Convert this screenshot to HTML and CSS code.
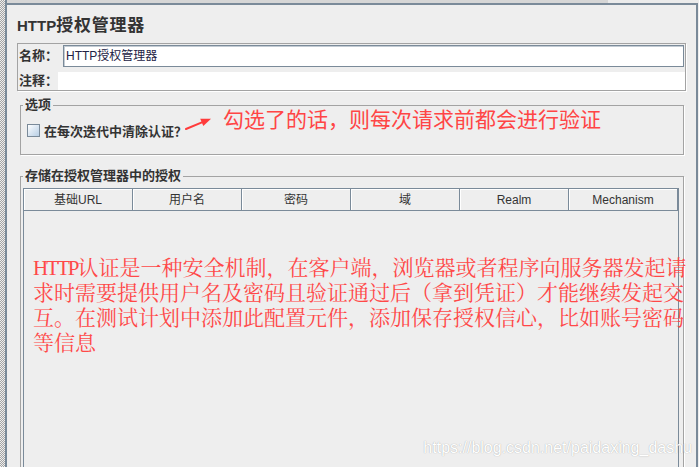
FILE: index.html
```html
<!DOCTYPE html>
<html>
<head>
<meta charset="utf-8">
<link rel="stylesheet" href="styles.css">
</head>
<body>
<div class="app">
  <div class="dots"></div>
  <div class="main">
    <div class="topstrip"></div>
    <div class="panel">
      <div class="title"><span class="t-en">HTTP</span><span class="t-zh">授权管理器</span></div>
      <div class="namebox">
        <div class="row row-name">
          <div class="lbl lbl-name">名称：</div>
          <div class="input">HTTP授权管理器</div>
        </div>
        <div class="row row-note">
          <div class="lbl lbl-note">注释：</div>
          <div class="note"></div>
        </div>
      </div>
      <fieldset class="group g-opt">
        <legend>选项</legend>
        <div class="opt-row"><span class="cb"></span><span class="opt-lbl">在每次迭代中清除认证？</span></div>
      </fieldset>
      <fieldset class="group g-auth">
        <legend>存储在授权管理器中的授权</legend>
        <div class="scroll">
          <div class="thead">
            <div class="th">基础URL</div>
            <div class="th">用户名</div>
            <div class="th">密码</div>
            <div class="th">域</div>
            <div class="th">Realm</div>
            <div class="th">Mechanism</div>
          </div>
        </div>
      </fieldset>
    </div>
  </div>
  <svg class="anno-arrow" width="30" height="20" viewBox="0 0 30 20">
    <line x1="2" y1="17" x2="18.5" y2="10.2" stroke="#ff3b3b" stroke-width="2" stroke-linecap="round"/>
    <polygon points="27,6.8 19.3,14 16.2,6.8" fill="#ff3b3b"/>
  </svg>
  <div class="anno-text1">勾选了的话，则每次请求前都会进行验证</div>
  <div class="anno-big">
    <div class="big-line"><span class="http">HTTP</span>认证是一种安全机制，在客户端，浏览器或者程序向服务器发起请</div>
    <div class="big-line">求时需要提供用户名及密码且验证通过后（拿到凭证）才能继续发起交</div>
    <div class="big-line">互。在测试计划中添加此配置元件，添加保存授权信心，比如账号密码</div>
    <div class="big-line">等信息</div>
  </div>
  <div class="watermark">https://blog.csdn.net/paidaxing_dashu</div>
</div>
</body>
</html>
```
FILE: styles.css
```css
* { box-sizing: border-box; }
html, body {
  margin: 0;
  height: 467px;
  overflow: hidden;
  background: #eeeeee;
}
body {
  font-family: "Liberation Sans", "Noto Sans CJK SC", sans-serif;
  color: #333333;
}
.app {
  position: relative;
  display: flex;
  height: 467px;
}
.dots {
  width: 5px;
  flex: none;
  background: repeating-conic-gradient(#a4a4a4 0 25%, #eeeeee 0 50%) 0 0 / 2px 2px;
}
.main {
  flex: 1;
  display: flex;
  flex-direction: column;
  border-left: 2px solid #7a8a99;
}
.topstrip {
  height: 3px;
  flex: none;
  background: linear-gradient(to right, #d6d6d6 601px, #ebebeb 601px);
}
.panel {
  flex: 1;
  border-top: 2px solid #7a8a99;
  border-right: 2px solid #7a8a99;
  margin-right: 1px;
  padding-top: 9px;
}
.title {
  height: 24px;
  line-height: 24px;
  margin-left: 10px;
  font-weight: bold;
  color: #333333;
  white-space: nowrap;
  display: flex;
  align-items: baseline;
}
.t-en { font-size: 15px; }
.t-zh { font-size: 17px; letter-spacing: 0.8px; }
.namebox {
  margin: 5px 0 0 10px;
  width: 669px;
  height: 48px;
  border: 1px solid #a3a3a3;
  box-shadow: 1px 1px 0 #ffffff;
  padding-top: 1px;
}
.row { display: flex; }
.row-name { height: 22px; }
.lbl {
  flex: none;
  font-weight: bold;
  font-size: 13px;
  padding-left: 1px;
  white-space: nowrap;
  color: #333333;
}
.lbl-name { width: 45px; line-height: 22px; }
.input {
  width: 621px;
  height: 22px;
  background: #ffffff;
  border: 1px solid #7a8a99;
  box-shadow: inset 1px 1px 0 #c4ccd4;
  font-size: 12px;
  line-height: 20px;
  padding-left: 2px;
  color: #222244;
  white-space: nowrap;
}
.row-note { margin-top: 5px; height: 18px; }
.lbl-note { width: 40px; line-height: 18px; }
.note { width: 627px; background: #ffffff; }
.group {
  margin: 0 0 0 13px;
  padding: 0 2px;
  border: 1px solid #a3a3a3;
  box-shadow: 1px 1px 0 #ffffff;
  width: 664px;
  min-width: 0;
}
.group legend {
  padding: 0 2px;
  font-weight: bold;
  font-size: 13px;
  line-height: 14px;
  color: #333333;
}
.g-opt { margin-top: 7px; }
.opt-row {
  display: flex;
  align-items: center;
  height: 20px;
  margin: 8px 0 14px 4px;
}
.cb {
  width: 13px;
  height: 13px;
  flex: none;
  border: 1px solid #7a8a99;
  background: linear-gradient(135deg, #ffffff 0%, #dde8f3 45%, #b8cfe5 100%);
  margin-right: 4px;
}
.opt-lbl {
  font-weight: bold;
  font-size: 13px;
  color: #333333;
}
.g-auth { margin-top: 14px; height: 320px; }
.scroll {
  margin-top: 5px;
  width: 656px;
  height: 300px;
  border: 1px solid #7a8a99;
}
.thead {
  display: flex;
  height: 22px;
  border-bottom: 1px solid #7a8a99;
}
.th {
  width: 109px;
  flex: none;
  border-right: 1px solid #7a8a99;
  box-shadow: inset 1px 1px 0 #ffffff;
  text-align: center;
  font-size: 12px;
  padding-top: 2px;
  line-height: 19px;
  color: #333333;
}
.anno-arrow {
  position: absolute;
  left: 184px;
  top: 112px;
}
.anno-text1 {
  position: absolute;
  left: 223px;
  top: 106px;
  font-family: "Noto Sans CJK SC", sans-serif;
  font-size: 21px;
  line-height: 24px;
  color: #ff4545;
  white-space: nowrap;
}
.anno-big {
  position: absolute;
  left: 33px;
  top: 256px;
  font-family: "Liberation Serif", "Noto Serif CJK SC", "Noto Sans CJK SC", serif;
  font-size: 21px;
  color: #ff4848;
  white-space: nowrap;
}
.big-line {
  height: 25px;
  line-height: 25px;
}
.http {
  letter-spacing: -2px;
}
.watermark {
  position: absolute;
  right: 7px;
  top: 439px;
  font-family: "Liberation Sans", sans-serif;
  font-size: 16px;
  line-height: 18px;
  color: #ffffff;
  text-shadow: 0 0 1px #9a9a9a;
  white-space: nowrap;
}
```
